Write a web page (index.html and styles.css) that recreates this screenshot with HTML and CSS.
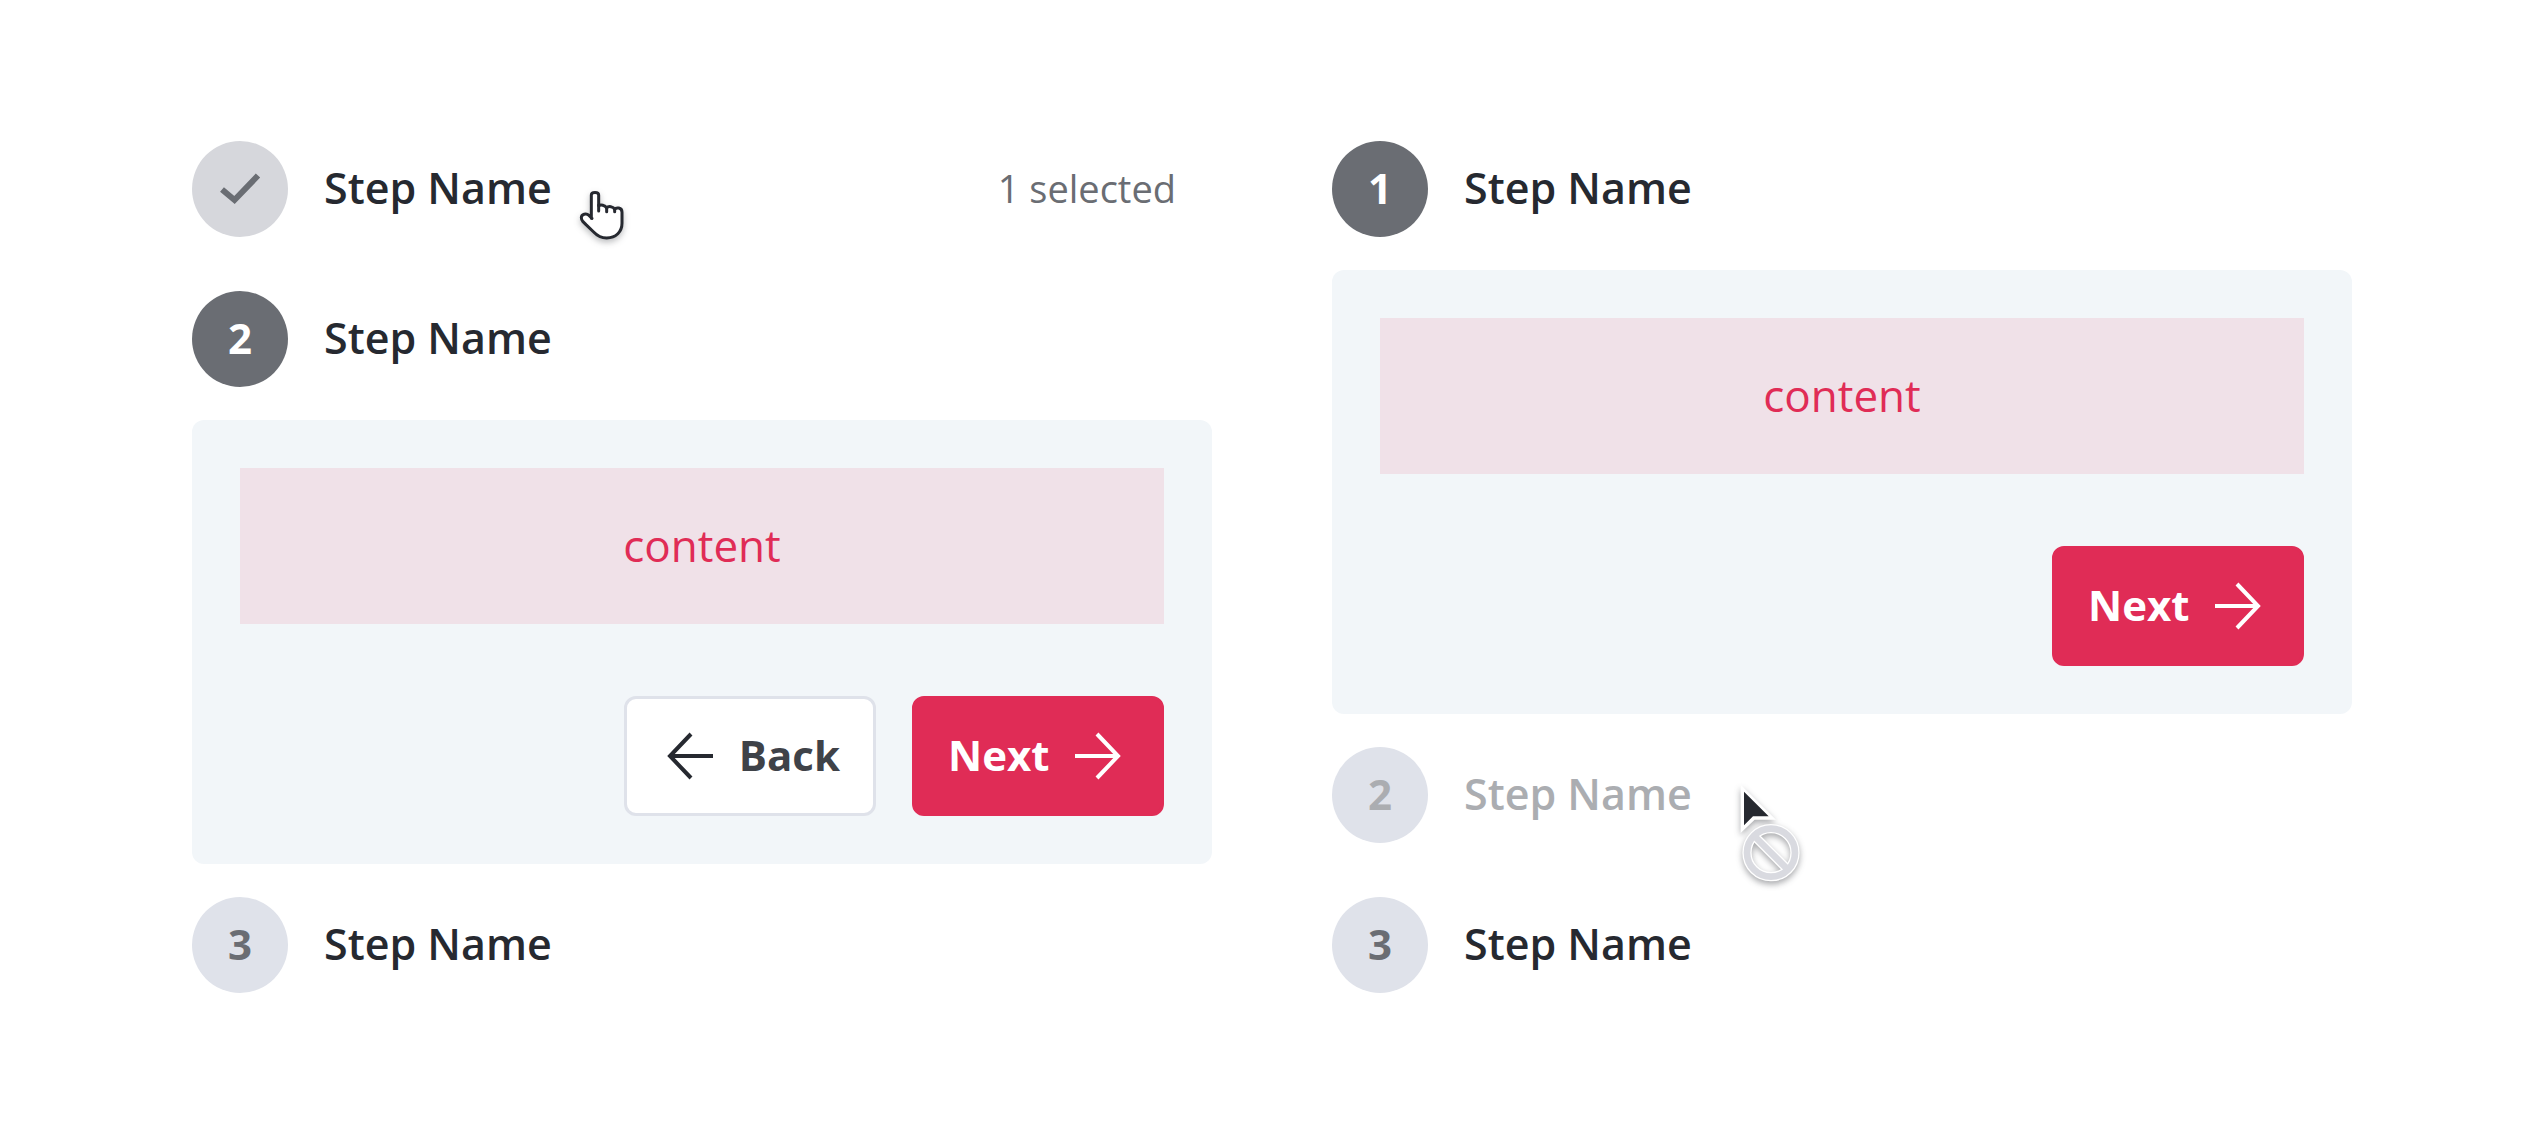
FILE: index.html
```
<!DOCTYPE html>
<html lang="en">
<head>
    <meta charset="UTF-8">
    <meta name="viewport" content="width=device-width, initial-scale=1">
    <title>Vertical Stepper</title>
    <link rel="stylesheet" href="styles.css">
</head>
<body>
    <main class="examples">

        <!-- second step open, first one done -->
        <section class="stepper">
            <button type="button" class="step">
                <span class="badge badge-done">
                    <svg class="check" viewBox="0 0 96 96" aria-label="Done">
                        <path d="M30 48.5 42.5 59 66 34.5"/>
                    </svg>
                </span>
                <span class="step-name">Step Name
                    <svg class="cursor cursor-hand" viewBox="0 0 270 270" aria-hidden="true">
                        <path d="M93 148 84 139C76 132 61 135 61 146Q61 152 66 158L75 167 98 189Q115 207 137 207C165 207 183 188 183 163V130C183 114 165 115 161 121C157 112 142 110 137 117C132 108 119 106 113 110V78C113 68 91 68 91 78V148"/>
                        <path d="M113 108V126M137 117V128M161 121V128"/>
                    </svg>
                </span>
                <span class="step-info">1 selected</span>
            </button>

            <button type="button" class="step" aria-expanded="true">
                <span class="badge badge-active">2</span>
                <span class="step-name">Step Name</span>
            </button>
            <div class="panel">
                <div class="content">content</div>
                <div class="actions">
                    <button type="button" class="btn btn-back">
                        <svg class="arrow" viewBox="0 0 60 60" aria-hidden="true">
                            <path d="M53 30H10M31 8 10 30 31 52"/>
                        </svg>
                        <span>Back</span>
                    </button>
                    <button type="button" class="btn btn-next">
                        <span>Next</span>
                        <svg class="arrow" viewBox="0 0 60 60" aria-hidden="true">
                            <path d="M7 30H50M29 8 50 30 29 52"/>
                        </svg>
                    </button>
                </div>
            </div>

            <button type="button" class="step">
                <span class="badge">3</span>
                <span class="step-name">Step Name</span>
            </button>
        </section>

        <!-- first step open, second one disabled -->
        <section class="stepper">
            <button type="button" class="step" aria-expanded="true">
                <span class="badge badge-active">1</span>
                <span class="step-name">Step Name</span>
            </button>
            <div class="panel">
                <div class="content">content</div>
                <div class="actions">
                    <button type="button" class="btn btn-next">
                        <span>Next</span>
                        <svg class="arrow" viewBox="0 0 60 60" aria-hidden="true">
                            <path d="M7 30H50M29 8 50 30 29 52"/>
                        </svg>
                    </button>
                </div>
            </div>

            <button type="button" class="step" disabled>
                <span class="badge">2</span>
                <span class="step-name">Step Name
                    <svg class="cursor cursor-blocked" viewBox="0 0 420 420" aria-hidden="true">
                        <g class="blocked-edge">
                            <circle cx="210" cy="281" r="72"/>
                            <path d="M160 231 260 331"/>
                        </g>
                        <g class="blocked-fill">
                            <circle cx="210" cy="281" r="72"/>
                            <path d="M160 231 260 331"/>
                        </g>
                        <path class="pointer-edge" d="M119 77 225 182H161L119 222Z"/>
                        <path class="pointer-fill" d="M129 98 203 172H156L129 199Z"/>
                    </svg>
                </span>
            </button>

            <button type="button" class="step">
                <span class="badge">3</span>
                <span class="step-name">Step Name</span>
            </button>
        </section>

    </main>
</body>
</html>
```
FILE: styles.css
```
* {
    box-sizing: border-box;
}
body {
    margin: 0;
    background-color: #fff;
    color: #262930;
    font-family: "Open Sans", sans-serif;
    font-size: 42px;
}
button {
    font-family: inherit;
    font-size: inherit;
    cursor: pointer;
}
.examples {
    display: grid;
    grid-template-columns: 1fr 1fr;
    gap: 120px;
    padding: 141px 192px;
}

/* step header */
.step {
    display: flex;
    align-items: center;
    gap: 36px;
    width: 100%;
    padding: 0;
    border: none;
    background: none;
    color: #262930;
    text-align: left;
}
.step + .step {
    margin-top: 54px;
}
.panel + .step {
    margin-top: 33px;
}
.badge {
    display: flex;
    align-items: center;
    justify-content: center;
    flex: none;
    width: 96px;
    height: 96px;
    padding-bottom: 3px;
    border-radius: 50%;
    background-color: #dfe2ea;
    color: #6a6d73;
    font-weight: 700;
}
.badge-active {
    background-color: #6a6d73;
    color: #fff;
}
.badge-done {
    padding-bottom: 0;
    background-color: #d6d7dc;
}
.check {
    width: 96px;
    height: 96px;
    fill: none;
    stroke: #6a6d73;
    stroke-width: 6;
}
.step-name {
    position: relative;
    padding-bottom: 3px;
    font-size: 43px;
    font-weight: 600;
}
.step-info {
    margin-left: auto;
    padding-right: 36px;
    padding-bottom: 3px;
    color: #6a6d73;
    font-size: 38px;
}
.step:disabled {
    cursor: not-allowed;
}
.step:disabled,
.step:disabled .badge {
    color: #abadb1;
}

/* open step */
.panel {
    margin-top: 33px;
    padding: 48px;
    border-radius: 12px;
    background-color: #f2f6f9;
}
.content {
    display: flex;
    align-items: center;
    justify-content: center;
    height: 156px;
    padding-bottom: 3px;
    background-color: #f0e1e8;
    color: #e02c56;
    font-size: 44px;
}
.actions {
    display: flex;
    justify-content: flex-end;
    gap: 36px;
    margin-top: 72px;
}
.btn {
    display: flex;
    align-items: center;
    justify-content: space-between;
    width: 252px;
    height: 120px;
    padding: 0 33px;
    border: 3px solid;
    border-radius: 12px;
    font-weight: 700;
}
.btn span {
    padding-bottom: 3px;
}
.btn-back {
    border-color: #dfe2ea;
    background-color: #fff;
    color: #3f4248;
}
.btn-next {
    border-color: #e02c56;
    background-color: #e02c56;
    color: #fff;
}
.arrow {
    width: 60px;
    height: 60px;
    fill: none;
    stroke: #fff;
    stroke-width: 4;
}
.btn-back .arrow {
    stroke: #262930;
}

/* mouse pointers drawn over the page */
.cursor {
    position: absolute;
    left: 100%;
    margin-left: 9px;
    fill: none;
    pointer-events: none;
}
.cursor-hand {
    top: 11px;
    width: 90px;
    height: 90px;
    fill: #fff;
    stroke: #262930;
    stroke-width: 9;
    stroke-linejoin: round;
    stroke-linecap: round;
    filter: drop-shadow(0 3px 3px rgba(38, 41, 48, 0.3));
}
.cursor-blocked {
    top: -5px;
    width: 140px;
    height: 140px;
    filter: drop-shadow(0 3px 3px rgba(38, 41, 48, 0.4));
}
.blocked-edge {
    stroke: #fff;
    stroke-width: 28;
}
.blocked-fill {
    stroke: #d9dae0;
    stroke-width: 20;
}
.pointer-edge {
    fill: #fff;
}
.pointer-fill {
    fill: #262930;
}
```
